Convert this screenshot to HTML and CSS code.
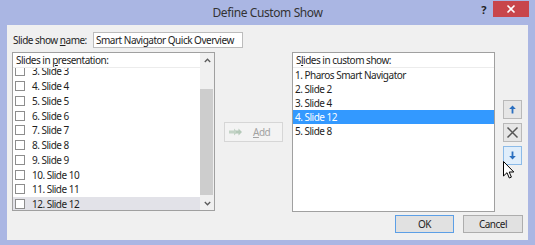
FILE: index.html
```html
<!DOCTYPE html>
<html>
<head>
<meta charset="utf-8">
<link rel="stylesheet" href="styles.css">
</head>
<body>
<div class="window">
  <div class="titlebar">
    <div class="title">Define Custom Show</div>
    <div class="controls">
      <div class="help">?</div>
      <div class="close">
        <svg width="10" height="10" viewBox="0 0 10 10"><path d="M1.5 1.5 L8.5 8.5 M8.5 1.5 L1.5 8.5" stroke="#fff" stroke-width="1.6" fill="none"/></svg>
      </div>
    </div>
  </div>
  <div class="content">
    <div class="name-row">
      <label class="name-label">Slide show <u>n</u>ame:</label>
      <div class="name-input">Smart Navigator Quick Overview</div>
    </div>
    <div class="lists">
      <div class="listbox left-box">
        <div class="list-main">
          <div class="list-header">Slides in <u>p</u>resentation:</div>
          <div class="list-body">
            <div class="rows">
              <div class="crow"><span class="check"></span>3. Slide 3</div>
              <div class="crow"><span class="check"></span>4. Slide 4</div>
              <div class="crow"><span class="check"></span>5. Slide 5</div>
              <div class="crow"><span class="check"></span>6. Slide 6</div>
              <div class="crow"><span class="check"></span>7. Slide 7</div>
              <div class="crow"><span class="check"></span>8. Slide 8</div>
              <div class="crow"><span class="check"></span>9. Slide 9</div>
              <div class="crow"><span class="check"></span>10. Slide 10</div>
              <div class="crow"><span class="check"></span>11. Slide 11</div>
              <div class="crow hot"><span class="check"></span>12. Slide 12</div>
            </div>
          </div>
        </div>
        <div class="scrollbar">
          <div class="sb-btn">
            <svg width="7" height="5" viewBox="0 0 7 5"><path d="M0.8 4 L3.5 1.2 L6.2 4" stroke="#5a5a5a" stroke-width="1.3" fill="none"/></svg>
          </div>
          <div class="sb-track"><div class="sb-thumb"></div></div>
          <div class="sb-btn">
            <svg width="7" height="5" viewBox="0 0 7 5"><path d="M0.8 1 L3.5 3.8 L6.2 1" stroke="#5a5a5a" stroke-width="1.3" fill="none"/></svg>
          </div>
        </div>
      </div>
      <div class="middle">
        <div class="add-btn">
          <svg width="14" height="8" viewBox="0 0 14 8"><path d="M0 2.6 H5 V0.5 L8.5 4 L5 7.5 V5.4 H0 Z" fill="#c3d3c6"/><path d="M7 2.6 H9.5 V0.5 L13 4 L9.5 7.5 V5.4 H7 Z" fill="#b5c9b9"/></svg>
          <span><u>A</u>dd</span>
        </div>
      </div>
      <div class="listbox right-box">
        <div class="list-header">S<u>l</u>ides in custom show:</div>
        <div class="srow">1. Pharos Smart Navigator</div>
        <div class="srow">2. Slide 2</div>
        <div class="srow">3. Slide 4</div>
        <div class="srow selected">4. Slide 12</div>
        <div class="srow">5. Slide 8</div>
      </div>
      <div class="order">
        <div class="obtn">
          <svg width="19" height="19" viewBox="0 0 19 19"><path d="M9.5 5.5 L12.8 9 H6.2 Z" fill="#2a6fc0"/><rect x="8.6" y="8.5" width="1.8" height="5" fill="#2a6fc0"/></svg>
        </div>
        <div class="obtn">
          <svg width="19" height="19" viewBox="0 0 19 19"><path d="M4.5 4.5 L14.5 14.5 M14.5 4.5 L4.5 14.5" stroke="#555" stroke-width="1.5" fill="none"/></svg>
        </div>
        <div class="obtn hover">
          <svg width="19" height="19" viewBox="0 0 19 19"><path d="M9.5 13.5 L12.8 10 H6.2 Z" fill="#2a6fc0"/><rect x="8.6" y="5.5" width="1.8" height="5" fill="#2a6fc0"/></svg>
        </div>
      </div>
    </div>
    <div class="footer">
      <div class="btn default">OK</div>
      <div class="btn">Cancel</div>
    </div>
  </div>
  <svg class="cursor" width="12" height="19" viewBox="0 0 12 19"><path d="M0.5 0.5 L0.5 15 L4 11.7 L6.3 17 L8.4 16.1 L6.2 11 L10.8 11 Z" fill="#fff" stroke="#000" stroke-width="1"/></svg>
</div>
</body>
</html>
```
FILE: styles.css
```css
html, body {
  margin: 0;
  padding: 0;
}
body {
  font-family: "Noto Sans", sans-serif;
  font-size: 10px;
  letter-spacing: -0.5px;
  color: #1e1e1e;
}
.window {
  width: 535px;
  height: 245px;
  background: #aab6e3;
  display: flex;
  flex-direction: column;
  position: relative;
}
.titlebar {
  height: 25px;
  display: grid;
  grid-template-columns: 1fr auto 1fr;
  align-items: start;
}
.title {
  grid-column: 2;
  font-size: 12px;
  letter-spacing: -0.4px;
  color: #333;
  line-height: 26px;
}
.controls {
  grid-column: 3;
  display: flex;
  justify-content: flex-end;
  align-items: flex-start;
}
.help {
  font-weight: bold;
  font-size: 11px;
  line-height: 12px;
  margin-top: 4px;
  margin-right: 7px;
  color: #222;
}
.close {
  width: 36px;
  height: 16px;
  margin-top: 1px;
  margin-right: 6px;
  background: #c8464b;
  display: flex;
  align-items: center;
  justify-content: center;
}
.content {
  margin: 0 7px;
  height: 215px;
  background: #f0f0f0;
  padding: 7px 5px 0 5px;
  box-sizing: border-box;
}
.name-row {
  display: flex;
  align-items: center;
  height: 16px;
}
.name-label {
  width: 81px;
  padding-left: 1px;
  box-sizing: border-box;
}
.name-input {
  width: 150px;
  height: 16px;
  box-sizing: border-box;
  border: 1px solid #bcbcbc;
  background: #fff;
  padding-left: 2px;
  line-height: 14px;
}
.lists {
  display: flex;
  margin-top: 4px;
  height: 160px;
}
.listbox {
  background: #fff;
  border: 1px solid #a0a0a0;
  box-sizing: border-box;
  width: 203px;
}
.left-box {
  height: 159px;
  display: flex;
}
.list-main {
  flex: 1;
  display: flex;
  flex-direction: column;
}
.list-header {
  height: 14px;
  line-height: 14px;
  padding-left: 3px;
  border-bottom: 1px solid #ececec;
}
.list-body {
  height: 142px;
  overflow: hidden;
}
.rows {
  margin-top: -4px;
}
.crow {
  height: 14.75px;
  display: flex;
  align-items: center;
}
.crow.hot {
  background: #e2e2e8;
}
.check {
  width: 10px;
  height: 10px;
  box-sizing: border-box;
  border: 1px solid #8d8d8d;
  background: #fff;
  margin-left: 2px;
  margin-right: 7px;
}
.scrollbar {
  width: 14px;
  background: #f0f0f0;
  display: flex;
  flex-direction: column;
}
.sb-btn {
  height: 14px;
  display: flex;
  align-items: center;
  justify-content: center;
}
.sb-track {
  flex: 1;
}
.sb-thumb {
  margin-top: 22px;
  width: 13px;
  height: 106px;
  background: #cdcdcd;
}
.middle {
  width: 77px;
  display: flex;
  align-items: center;
  justify-content: center;
}
.add-btn {
  width: 59px;
  height: 20px;
  box-sizing: border-box;
  border: 1px solid #d6d6d6;
  background: #f3f3f3;
  color: #a2a2a2;
  display: flex;
  align-items: center;
  gap: 10px;
  padding-left: 4px;
}
.right-box {
  height: 160px;
}
.srow {
  height: 14px;
  line-height: 14px;
  padding-left: 2px;
}
.srow.selected {
  background: #3399ff;
  color: #fff;
}
.order {
  margin-left: 8px;
  display: flex;
  flex-direction: column;
  justify-content: center;
  gap: 4px;
}
.obtn {
  width: 19px;
  height: 19px;
  box-sizing: border-box;
  border: 1px solid #b9b9b9;
  background: #e6e6e6;
  display: flex;
  align-items: center;
  justify-content: center;
}
.obtn svg {
  flex: none;
  margin: -1px;
}
.obtn.hover {
  background: #e0eefb;
  border-color: #8cbbe8;
}
.footer {
  display: flex;
  justify-content: flex-end;
  gap: 9px;
  margin-top: 3px;
}
.btn {
  width: 60px;
  height: 18px;
  box-sizing: border-box;
  border: 1px solid #adadad;
  background: #e1e1e1;
  text-align: center;
  line-height: 16px;
}
.btn.default {
  width: 59px;
  border-color: #5c9fe6;
}
.cursor {
  position: absolute;
  left: 503px;
  top: 161px;
}
```
